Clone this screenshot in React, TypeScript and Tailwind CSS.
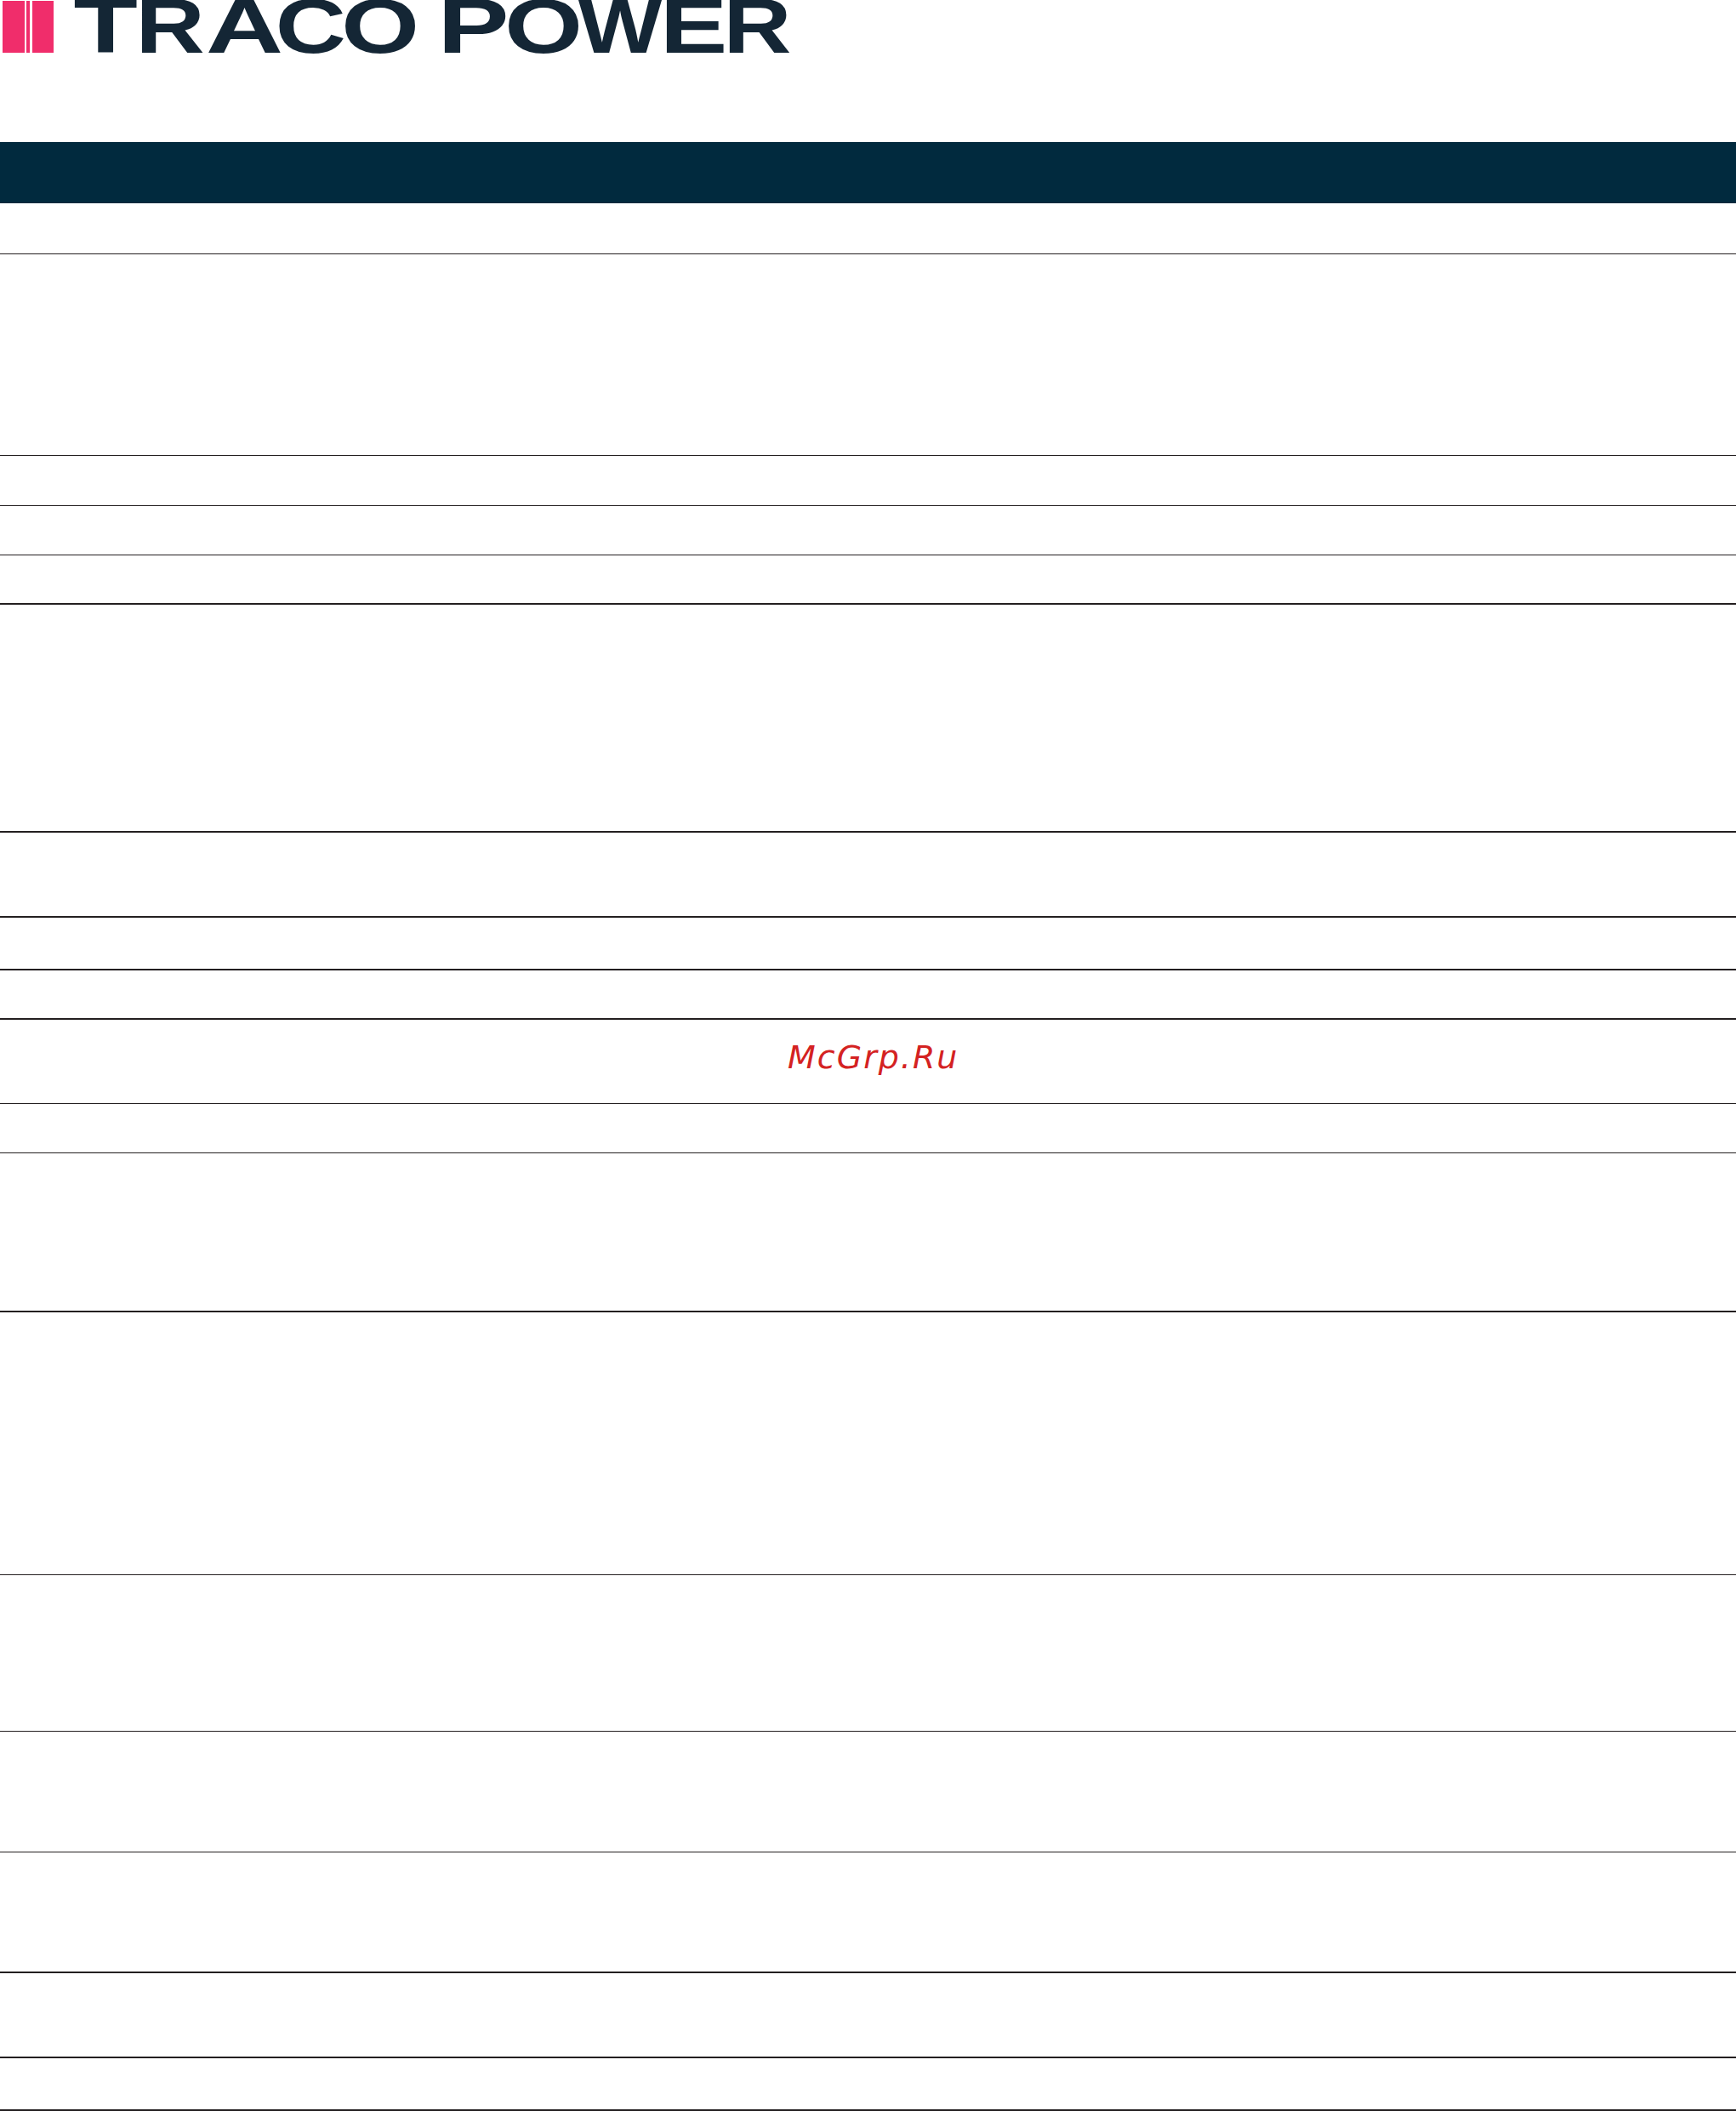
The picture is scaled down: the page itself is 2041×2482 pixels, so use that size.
const rows = [
  { h: 'h-[60px]', line: 'border-b' },
  { h: 'h-[237px]', line: 'border-b' },
  { h: 'h-[59px]', line: 'border-b' },
  { h: 'h-[58px]', line: 'border-b' },
  { h: 'h-[58px]', line: 'border-b-2' },
  { h: 'h-[268px]', line: 'border-b-2' },
  { h: 'h-[100px]', line: 'border-b-2' },
  { h: 'h-[62px]', line: 'border-b-2' },
  { h: 'h-[58px]', line: 'border-b-2' },
  { h: 'h-[99px]', line: 'border-b' },
  { h: 'h-[58px]', line: 'border-b' },
  { h: 'h-[187px]', line: 'border-b-2' },
  { h: 'h-[309px]', line: 'border-b' },
  { h: 'h-[184px]', line: 'border-b' },
  { h: 'h-[142px]', line: 'border-b' },
  { h: 'h-[142px]', line: 'border-b-2' },
  { h: 'h-[100px]', line: 'border-b-2' },
  { h: 'h-[62px]', line: 'border-b-2' },
];

// wordmark is much wider than any installed font, so each letter gets its own stretch
const letters = [
  { ch: 'T', x: 86.4, sx: 1.37 },
  { ch: 'R', x: 159.5, sx: 1.25 },
  { ch: 'A', x: 242, sx: 1.4 },
  { ch: 'C', x: 323.8, sx: 1.28 },
  { ch: 'O', x: 401.2, sx: 1.31 },
  { ch: 'P', x: 514.6, sx: 1.4 },
  { ch: 'O', x: 593.2, sx: 1.31 },
  { ch: 'W', x: 679.7, sx: 1.16 },
  { ch: 'E', x: 776, sx: 1.32 },
  { ch: 'R', x: 850.6, sx: 1.23 },
];

function Logo() {
  return (
    <svg width="940" height="64" viewBox="0 0 940 64" className="block">
      <rect x="3" y="1" width="26" height="61" fill="#f02d6b" />
      <rect x="31" y="1" width="4" height="61" fill="#f02d6b" />
      <rect x="38" y="1" width="25" height="61" fill="#f02d6b" />
      {letters.map((l, i) => (
        <text
          key={i}
          transform={`translate(${l.x} 62) scale(${l.sx} 1)`}
          fontFamily="'Liberation Sans', sans-serif"
          fontWeight="700"
          fontSize="90"
          fill="#142635"
        >
          {l.ch}
        </text>
      ))}
    </svg>
  );
}

export default function App() {
  return (
    <div className="w-[2041px] h-[2482px] bg-white overflow-hidden font-['Liberation_Sans',sans-serif]">
      <Logo />
      <div className="h-[103px]" />
      <div className="h-[72px] bg-[#012a3e]" />
      {rows.map((row, i) => (
        <div key={i} className={`relative ${row.h} ${row.line} border-[#231f20]`}>
          {i === 9 && (
            <span className="absolute left-[926px] top-[19px] font-['DejaVu_Sans',sans-serif] italic text-[38px] leading-[50px] tracking-[2px] text-[#d42222]">
              McGrp.Ru
            </span>
          )}
        </div>
      ))}
    </div>
  );
}
